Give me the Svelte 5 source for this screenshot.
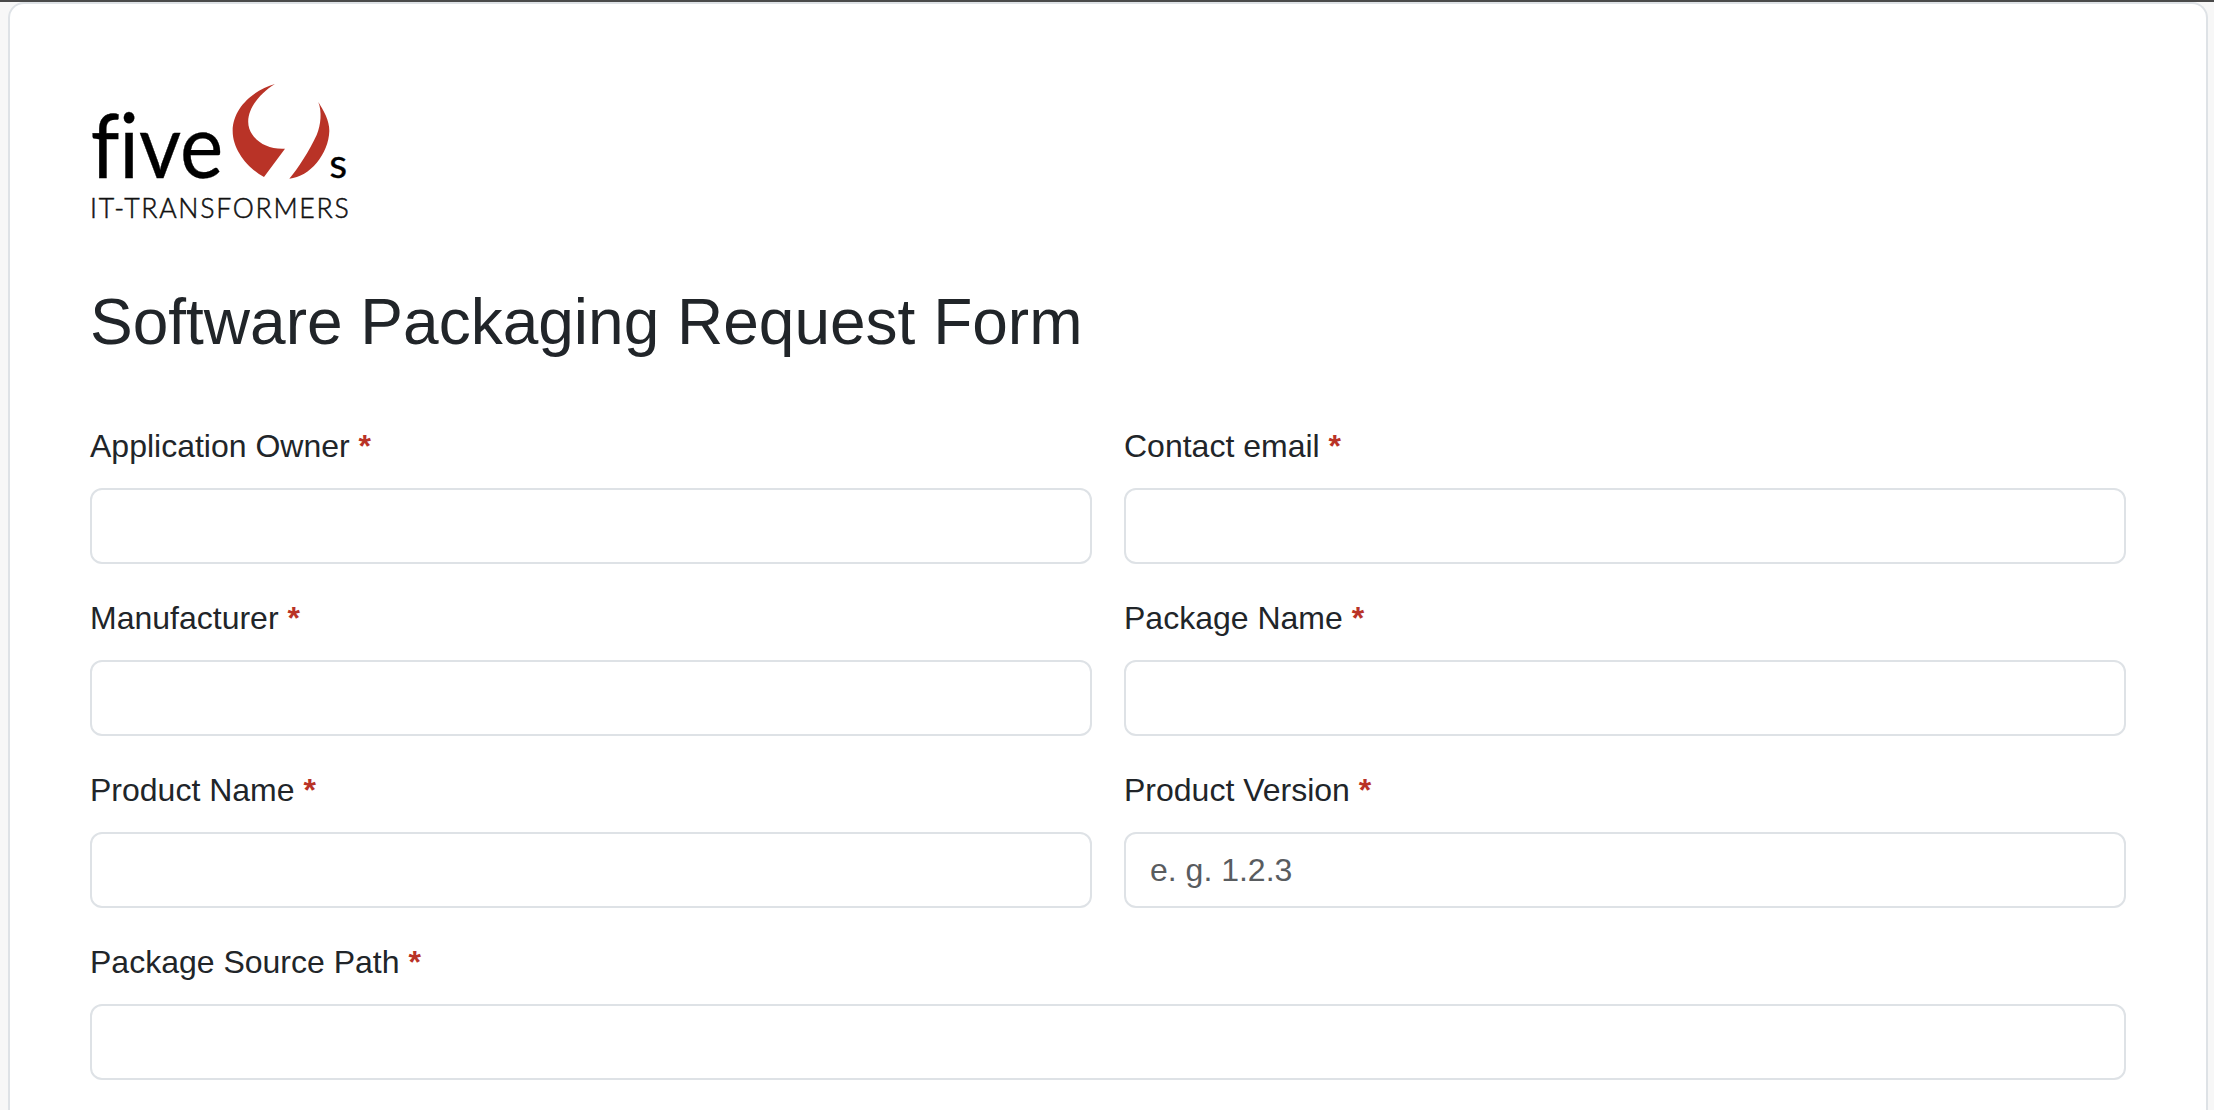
<script>
  const rows = [
    [{ label: 'Application Owner' }, { label: 'Contact email' }],
    [{ label: 'Manufacturer' }, { label: 'Package Name' }],
    [{ label: 'Product Name' }, { label: 'Product Version', placeholder: 'e. g. 1.2.3' }],
    [{ label: 'Package Source Path' }]
  ];
</script>

<div class="window">
  <main class="card">
    <svg class="logo" viewBox="90 60 780 440" width="260" height="146.67" role="img" aria-label="fiveNines IT-Transformers">
      <text x="92" y="350" class="five" textLength="398" lengthAdjust="spacingAndGlyphs">five</text>
      <path class="red" d="M645 69C585 85 518 138 518 210C518 268 565 323 612 348L675 263C625 266 583 243 568 203C553 158 590 103 645 69Z"/>
      <path class="red" d="M775 123C790 148 809 178 808 210C806 278 750 348 688 353C712 325 748 270 770 222C783 190 786 153 775 123Z"/>
      <text x="808" y="350" class="s">s</text>
      <text x="90" y="472" class="tag" textLength="776">IT-TRANSFORMERS</text>
    </svg>

    <h1>Software Packaging Request Form</h1>

    <form>
      {#each rows as row}
        <div class="row">
          {#each row as field}
            <div class="field">
              <label>
                <span class="label-text">{field.label} <span class="req">*</span></span>
                <input type="text" placeholder={field.placeholder ?? ''} />
              </label>
            </div>
          {/each}
        </div>
      {/each}
    </form>
  </main>
</div>

<style>
  :global(html), :global(body) {
    margin: 0;
    height: 100%;
    overflow: hidden;
    background: #f7f7f7;
  }
  .window {
    border-top: 2px solid #4a4a4a;
    height: 1108px;
    overflow: hidden;
    padding: 0 6px 0 8px;
    font-family: "Liberation Sans", Arial, sans-serif;
    color: #212529;
  }
  .card {
    background: #fff;
    border: 2px solid #dee2e6;
    border-bottom: 0;
    border-radius: 16px 16px 0 0;
    padding: 77px 80px 80px;
    min-height: 1300px;
  }
  .logo {
    display: block;
  }
  .five {
    font-family: Lato, sans-serif;
    font-size: 266px;
    font-variant-ligatures: none;
    fill: #000;
    stroke: #000;
    stroke-width: 1px;
  }
  .s {
    font-family: Lato, sans-serif;
    font-size: 124px;
    fill: #000;
    stroke: #000;
    stroke-width: 1px;
  }
  .tag {
    font-family: Lato, sans-serif;
    font-weight: 300;
    font-size: 80px;
    fill: #111;
    stroke: #111;
    stroke-width: 1.5px;
  }
  .red {
    fill: #b93327;
  }
  h1 {
    margin: 56px 0 62px;
    font-size: 64px;
    font-weight: 400;
    line-height: 1.2;
  }
  .row {
    display: flex;
    gap: 32px;
  }
  .field {
    flex: 1;
    margin-bottom: 30px;
  }
  label {
    display: block;
  }
  .label-text {
    display: block;
    font-size: 32px;
    line-height: 48px;
    margin-bottom: 18px;
  }
  .req {
    color: #b93327;
    font-weight: 700;
  }
  input {
    display: block;
    box-sizing: border-box;
    width: 100%;
    height: 76px;
    padding: 12px 24px;
    border: 2px solid #dee2e6;
    border-radius: 12px;
    background: #fff;
    font: 32px/48px "Liberation Sans", Arial, sans-serif;
    color: #212529;
    outline: none;
  }
  input::placeholder {
    color: #595c5f;
    opacity: 1;
  }
</style>
